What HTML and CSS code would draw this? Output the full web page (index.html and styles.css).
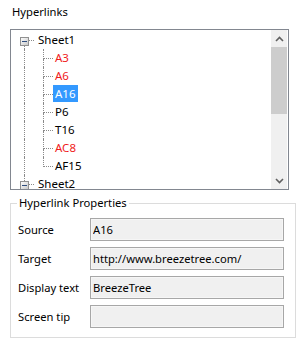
FILE: index.html
```html
<!DOCTYPE html>
<html lang="en">
<head>
    <meta charset="UTF-8">
    <meta name="viewport" content="width=device-width, initial-scale=1.0">
    <title>Hyperlinks</title>
    <link rel="stylesheet" href="styles.css">
</head>
<body>
    <div class="title">Hyperlinks</div>

    <div class="tree-box">
        <div class="tree">
            <div class="row">
                <span class="indent-root"></span>
                <span class="exp-cell">
                    <span class="seg seg-top"></span>
                    <svg class="expander" width="9" height="9" viewBox="0 0 9 9">
                        <defs>
                            <linearGradient id="expbg" x1="0" y1="0" x2="1" y2="1">
                                <stop offset="0" stop-color="#ffffff"/>
                                <stop offset="1" stop-color="#c6c6c6"/>
                            </linearGradient>
                        </defs>
                        <rect x="0.5" y="0.5" width="8" height="8" fill="url(#expbg)" stroke="#919191"/>
                        <rect x="2" y="4" width="5" height="1" fill="#2f4d7e"/>
                    </svg>
                    <span class="seg seg-bottom line"></span>
                </span>
                <span class="hline"></span>
                <span class="label">Sheet1</span>
            </div>
            <div class="row">
                <span class="guide"></span>
                <span class="conn"><span class="conn-top"></span><span class="conn-bottom"></span></span>
                <span class="label red">A3</span>
            </div>
            <div class="row">
                <span class="guide"></span>
                <span class="conn"><span class="conn-top"></span><span class="conn-bottom"></span></span>
                <span class="label red">A6</span>
            </div>
            <div class="row">
                <span class="guide"></span>
                <span class="conn"><span class="conn-top"></span><span class="conn-bottom"></span></span>
                <span class="label selected">A16</span>
            </div>
            <div class="row">
                <span class="guide"></span>
                <span class="conn"><span class="conn-top"></span><span class="conn-bottom"></span></span>
                <span class="label">P6</span>
            </div>
            <div class="row">
                <span class="guide"></span>
                <span class="conn"><span class="conn-top"></span><span class="conn-bottom"></span></span>
                <span class="label">T16</span>
            </div>
            <div class="row">
                <span class="guide"></span>
                <span class="conn"><span class="conn-top"></span><span class="conn-bottom"></span></span>
                <span class="label red">AC8</span>
            </div>
            <div class="row">
                <span class="guide"></span>
                <span class="conn last"><span class="conn-top"></span><span class="conn-bottom"></span></span>
                <span class="label">AF15</span>
            </div>
            <div class="row">
                <span class="indent-root"></span>
                <span class="exp-cell">
                    <span class="seg seg-top line"></span>
                    <svg class="expander" width="9" height="9" viewBox="0 0 9 9">
                        <rect x="0.5" y="0.5" width="8" height="8" fill="url(#expbg)" stroke="#919191"/>
                        <rect x="2" y="4" width="5" height="1" fill="#2f4d7e"/>
                    </svg>
                    <span class="seg seg-bottom"></span>
                </span>
                <span class="hline"></span>
                <span class="label">Sheet2</span>
            </div>
        </div>
        <div class="scrollbar">
            <div class="sb-btn">
                <svg width="9" height="6" viewBox="0 0 9 6"><polyline points="1,5 4.5,1.5 8,5" fill="none" stroke="#606060" stroke-width="1.6"/></svg>
            </div>
            <div class="sb-thumb"></div>
            <div class="sb-track"></div>
            <div class="sb-btn">
                <svg width="9" height="6" viewBox="0 0 9 6"><polyline points="1,1 4.5,4.5 8,1" fill="none" stroke="#606060" stroke-width="1.6"/></svg>
            </div>
        </div>
    </div>

    <fieldset class="props">
        <legend>Hyperlink Properties</legend>
        <div class="field">
            <label for="source">Source</label>
            <input type="text" id="source" value="A16" readonly>
        </div>
        <div class="field">
            <label for="target">Target</label>
            <input type="text" id="target" value="http://www.breezetree.com/" readonly>
        </div>
        <div class="field">
            <label for="display">Display text</label>
            <input type="text" id="display" value="BreezeTree" readonly>
        </div>
        <div class="field">
            <label for="tip">Screen tip</label>
            <input type="text" id="tip" value="" readonly>
        </div>
    </fieldset>
</body>
</html>
```

FILE: styles.css
```css
body {
    font-family: "Noto Sans", "Open Sans", sans-serif;
    font-size: 11.2px;
    color: #000000;
    background-color: #ffffff;
    margin: 0;
    padding: 0;
}

.title {
    line-height: 16px;
    padding: 4px 0 0 12px;
    height: 16px;
}

/* tree view */
.tree-box {
    display: flex;
    margin: 9px 0 0 10px;
    width: 277px;
    height: 159px;
    border: 1px solid #828790;
}

.tree {
    flex: 1;
    padding-top: 1px;
    overflow: hidden;
}

.row {
    display: flex;
    align-items: flex-start;
    height: 18px;
    line-height: 18px;
    white-space: nowrap;
}

.indent-root {
    width: 9px;
    flex-shrink: 0;
}

.exp-cell {
    display: flex;
    flex-direction: column;
    width: 9px;
    height: 18px;
}

.seg {
    display: block;
    margin-left: 4px;
    width: 0;
}

.seg-top {
    height: 6px;
}

.seg-bottom {
    height: 3px;
}

.seg.line {
    border-left: 1px dotted #8a8a8a;
}

.expander {
    display: block;
}

.hline {
    width: 5px;
    height: 9px;
    border-bottom: 1px dotted #8a8a8a;
    margin-right: 2px;
}

.guide {
    width: 18px;
    height: 18px;
    margin-left: 13px;
    border-left: 1px dotted #8a8a8a;
}

.conn {
    display: flex;
    flex-direction: column;
    width: 10px;
    height: 18px;
}

.conn-top {
    height: 9px;
    border-left: 1px dotted #8a8a8a;
    border-bottom: 1px dotted #8a8a8a;
}

.conn-bottom {
    height: 8px;
    border-left: 1px dotted #8a8a8a;
}

.conn.last .conn-bottom {
    border-left-color: transparent;
}

.label {
    padding: 1px 2px 0;
    height: 16px;
    line-height: 16px;
    font-size: 11.5px;
}

.red {
    color: #f01a1a;
}

.selected {
    background-color: #3399ff;
    color: #ffffff;
}

/* scrollbar */
.scrollbar {
    display: flex;
    flex-direction: column;
    width: 16px;
    margin-right: 1px;
    background-color: #f0f0f0;
}

.sb-btn {
    height: 17px;
    display: flex;
    align-items: center;
    justify-content: center;
}

.sb-thumb {
    height: 67px;
    background-color: #cdcdcd;
}

.sb-track {
    flex: 1;
}

/* properties group */
.props {
    margin: 5px 0 0 10px;
    width: 273px;
    padding: 0 4px 9px 7px;
    border: 1px solid #dcdcdc;
}

.props legend {
    margin-left: -1px;
    padding: 0 2px;
    line-height: 16px;
}

.field {
    display: flex;
    align-items: center;
    margin-top: 6px;
}

.field:first-of-type {
    margin-top: 7px;
}

.field label {
    width: 72px;
}

.field input {
    width: 194px;
    height: 23px;
    box-sizing: border-box;
    margin: 0;
    padding: 0 2px;
    font-family: inherit;
    font-size: 11.2px;
    color: #000000;
    background-color: #f0f0f0;
    border: 1px solid #a7a7a7;
    box-shadow: inset 0 0 0 1px #f6f6f6;
    outline: none;
}
```
